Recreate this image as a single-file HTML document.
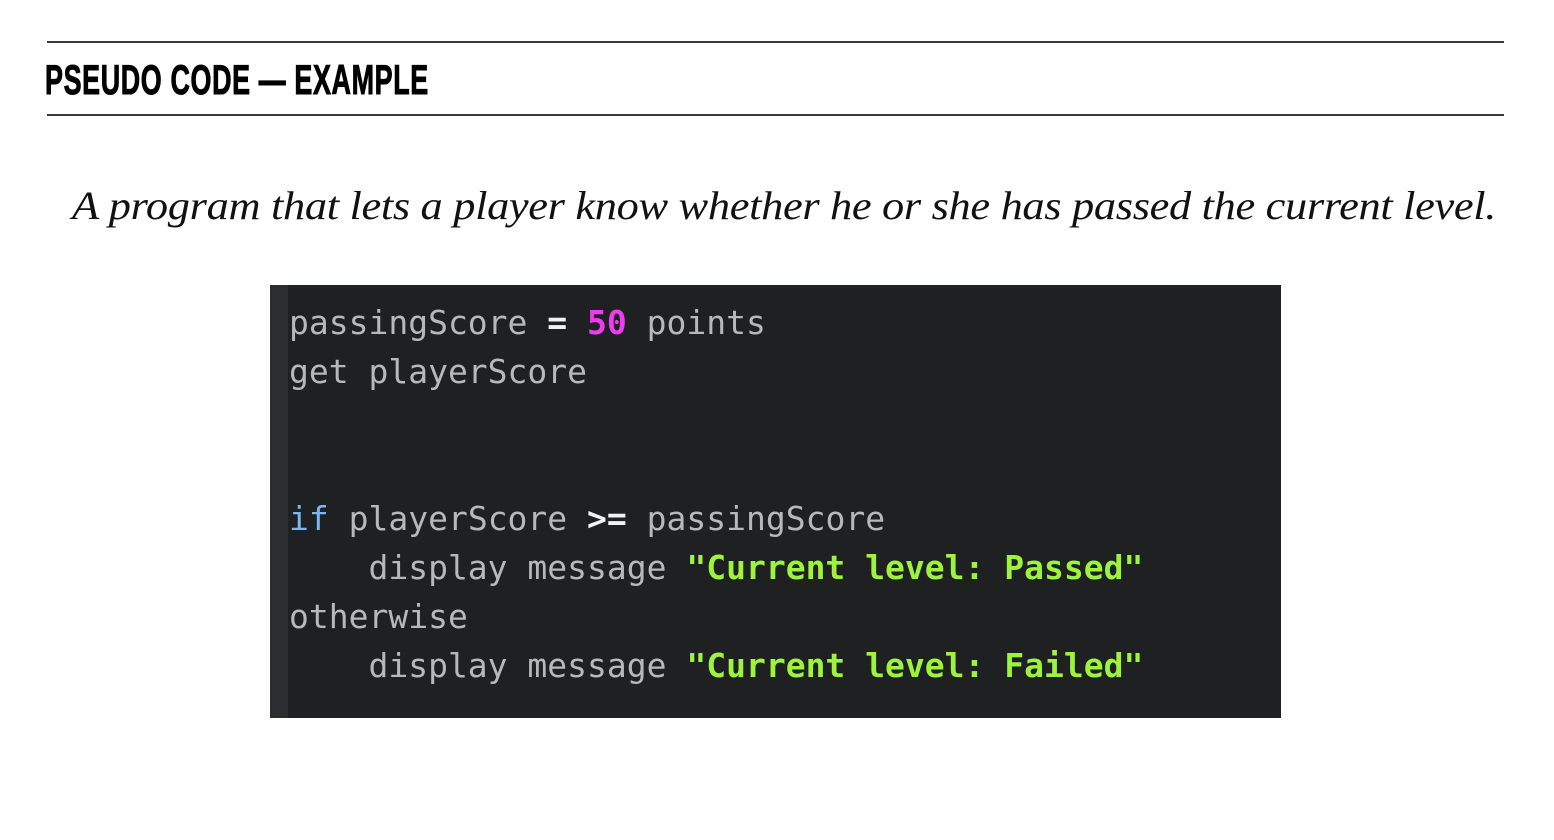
<!DOCTYPE html>
<html><head><style>
html,body{margin:0;padding:0;background:#fff;width:1554px;height:840px;overflow:hidden}
.line{position:absolute;left:47px;width:1457px;height:2px;background:#3a3a3a}
.title{position:absolute;left:45px;top:57px;font:bold 42px/46px "Liberation Sans",sans-serif;color:#000;transform:scaleX(0.64);transform-origin:left top;white-space:nowrap;letter-spacing:1px;-webkit-text-stroke:1px #000}
.sub{position:absolute;left:72px;top:184px;font:italic 40px/44px "Liberation Serif",serif;color:#111;white-space:nowrap;letter-spacing:-0.3px;transform:scaleX(1.11);transform-origin:left top}
.code{position:absolute;left:270px;top:285px;width:1011px;height:433px;background:#1f2022}
.gut{position:absolute;left:0;top:0;width:18px;height:100%;background:#2b2e31}
pre{position:absolute;left:289px;top:298px;margin:0;font:33px/49px "DejaVu Sans Mono","Liberation Mono",monospace;color:#b8b8b8}
.w{color:#f2f2f2;font-weight:bold}.n{color:#f03cf0;font-weight:bold}.k{color:#7ab8f5}.s{color:#9cf53c;font-weight:bold}
</style></head><body>
<div class="line" style="top:41px"></div>
<div class="title">PSEUDO CODE — EXAMPLE</div>
<div class="line" style="top:114px"></div>
<div class="sub">A program that lets a player know whether he or she has passed the current level.</div>
<div class="code"><div class="gut"></div></div>
<pre>passingScore <span class="w">=</span> <span class="n">50</span> points
get playerScore


<span class="k">if</span> playerScore <span class="w">&gt;=</span> passingScore
    display message <span class="s">"Current level: Passed"</span>
otherwise
    display message <span class="s">"Current level: Failed"</span></pre>
</body></html>
